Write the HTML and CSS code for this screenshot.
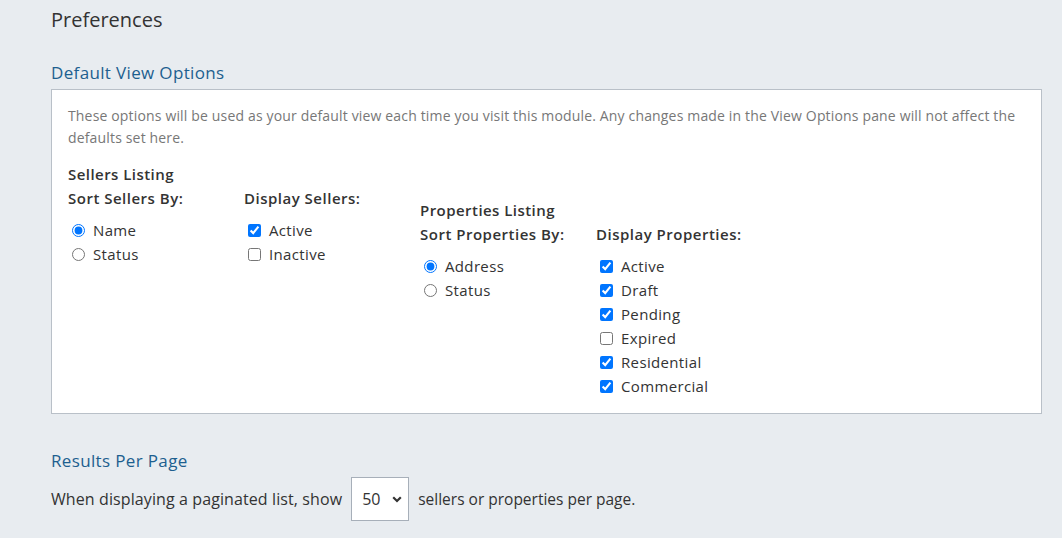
FILE: index.html
```html
<!DOCTYPE html>
<html>
<head>
<meta charset="utf-8">
<link rel="stylesheet" href="styles.css">
</head>
<body>
<div class="page">
  <h1 class="page-title">Preferences</h1>

  <h2 class="section-title">Default View Options</h2>
  <div class="panel">
    <p class="desc">These options will be used as your default view each time you visit this module. Any changes made in the View Options pane will not affect the defaults set here.</p>
    <div class="groups">
      <div class="group">
        <div class="group-title">Sellers Listing</div>
        <div class="cols">
          <div class="col">
            <div class="col-title">Sort Sellers By:</div>
            <label class="opt"><input type="radio" name="ss" checked> Name</label>
            <label class="opt"><input type="radio" name="ss"> Status</label>
          </div>
          <div class="col">
            <div class="col-title">Display Sellers:</div>
            <label class="opt"><input type="checkbox" checked> Active</label>
            <label class="opt"><input type="checkbox"> Inactive</label>
          </div>
        </div>
      </div>
      <div class="group group-props">
        <div class="group-title">Properties Listing</div>
        <div class="cols">
          <div class="col">
            <div class="col-title">Sort Properties By:</div>
            <label class="opt"><input type="radio" name="sp" checked> Address</label>
            <label class="opt"><input type="radio" name="sp"> Status</label>
          </div>
          <div class="col">
            <div class="col-title">Display Properties:</div>
            <label class="opt"><input type="checkbox" checked> Active</label>
            <label class="opt"><input type="checkbox" checked> Draft</label>
            <label class="opt"><input type="checkbox" checked> Pending</label>
            <label class="opt"><input type="checkbox"> Expired</label>
            <label class="opt"><input type="checkbox" checked> Residential</label>
            <label class="opt"><input type="checkbox" checked> Commercial</label>
          </div>
        </div>
      </div>
    </div>
  </div>

  <h2 class="section-title results-title">Results Per Page</h2>
  <div class="results-row">
    <span class="results-lead">When displaying a paginated list, show</span>
    <div class="select">
      <span>50</span>
      <svg class="chev" width="10" height="7" viewBox="0 0 10 7"><path d="M1.2 1.2 L5 5 L8.8 1.2" fill="none" stroke="#333" stroke-width="2.2"/></svg>
    </div>
    <span class="results-tail">sellers or properties per page.</span>
  </div>
</div>
</body>
</html>
```

FILE: styles.css
```css
html, body {
  margin: 0;
  padding: 0;
  background: #e8ecf0;
}
body {
  font-family: "Open Sans", "Lato", sans-serif;
  color: #333;
  font-size: 15px;
}
.page {
  padding: 6px 20px 0 51px;
}
.page-title {
  font-size: 20px;
  font-weight: 400;
  color: #333;
  margin: 0;
  line-height: 28px;
}
.section-title {
  font-size: 17px;
  letter-spacing: 0.35px;
  font-weight: 400;
  color: #1d5f8f;
  margin: 27px 0 0;
  line-height: 24px;
}
.panel {
  margin-top: 4px;
  background: #fff;
  border: 1px solid #b9c0c8;
  padding: 15px 16px 15px 16px;
}
.desc {
  margin: 0;
  font-size: 14px;
  letter-spacing: 0.16px;
  line-height: 22px;
  color: #777;
}
.groups {
  display: flex;
  margin-top: 13px;
}
.group-title {
  font-weight: 600;
  letter-spacing: 0.45px;
  line-height: 24px;
}
.cols {
  display: flex;
}
.col {
  width: 176px;
}
.col-title {
  font-weight: 600;
  letter-spacing: 0.5px;
  line-height: 24px;
  margin-bottom: 8px;
}
.group-props {
  margin-top: 36px;
}
.opt {
  display: flex;
  align-items: center;
  line-height: 24px;
  height: 24px;
  letter-spacing: 0.35px;
}
.opt input {
  margin: 0 8px 0 4px;
  width: 13px;
  height: 13px;
}
.results-title {
  margin-top: 35px;
}
.results-row {
  display: flex;
  align-items: center;
  margin-top: 4px;
  font-size: 16px;
}
.results-lead {
  letter-spacing: 0.1px;
}
.results-tail {
  font-size: 15.5px;
}
.select {
  display: flex;
  align-items: center;
  justify-content: space-between;
  box-sizing: border-box;
  width: 58px;
  height: 44px;
  margin: 0 9px 0 9px;
  padding: 0 6px 0 10px;
  background: #fff;
  border: 1px solid #a7afb9;
  font-size: 16px;
}
```
